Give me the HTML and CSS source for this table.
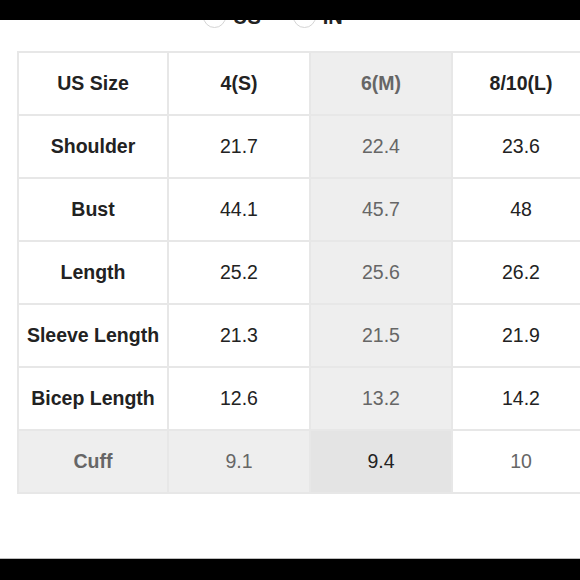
FILE: index.html
```
<!DOCTYPE html>
<html>
<head>
<meta charset="utf-8">
<link rel="stylesheet" href="styles.css">
</head>
<body>
<div class="topbar"></div>
<div class="page">
  <div class="radios">
    <label class="opt"><span class="circle"></span><span class="opt-text">US</span></label>
    <label class="opt"><span class="circle"></span><span class="opt-text">IN</span></label>
  </div>
  <table class="chart">
    <colgroup>
      <col class="c1"><col class="c2"><col class="c3"><col class="c4">
    </colgroup>
    <tr class="head"><th>US Size</th><th>4(S)</th><th class="hl">6(M)</th><th>8/10(L)</th></tr>
    <tr><th>Shoulder</th><td>21.7</td><td class="hl">22.4</td><td>23.6</td></tr>
    <tr><th>Bust</th><td>44.1</td><td class="hl">45.7</td><td>48</td></tr>
    <tr><th>Length</th><td>25.2</td><td class="hl">25.6</td><td>26.2</td></tr>
    <tr><th>Sleeve Length</th><td>21.3</td><td class="hl">21.5</td><td>21.9</td></tr>
    <tr><th>Bicep Length</th><td>12.6</td><td class="hl">13.2</td><td>14.2</td></tr>
    <tr class="rowhl"><th>Cuff</th><td>9.1</td><td class="cross">9.4</td><td class="plain">10</td></tr>
  </table>
</div>
<div class="bottombar"></div>
</body>
</html>
```
FILE: styles.css
```
html, body {
  margin: 0;
  padding: 0;
  overflow: hidden;
  background: #fff;
  font-family: "Liberation Sans", Arial, sans-serif;
  color: #222;
}
.topbar {
  position: fixed;
  top: 0;
  left: 0;
  right: 0;
  height: 20px;
  background: #000;
  z-index: 2;
}
.bottombar {
  position: fixed;
  bottom: 0;
  left: 0;
  right: 0;
  height: 21px;
  background: #000;
  border-top: 1px solid #bdbdbd;
  z-index: 2;
}
.page {
  width: 700px;
  padding-top: 5px;
}
.radios {
  display: flex;
  align-items: center;
  gap: 32px;
  margin-left: 203px;
  height: 22px;
}
.opt {
  display: flex;
  align-items: center;
  gap: 7px;
}
.circle {
  width: 21px;
  height: 21px;
  border: 1px solid #d4d4d4;
  border-radius: 50%;
}
.opt-text {
  font-weight: bold;
  font-size: 20px;
  padding-top: 3px;
}
.chart {
  margin: 24px 0 0 17px;
  border-collapse: collapse;
  table-layout: fixed;
  width: 572px;
}
.c1 { width: 150px; }
.c2 { width: 142px; }
.c3 { width: 142px; }
.c4 { width: 138px; }
.chart th, .chart td {
  border: 2px solid #e7e7e7;
  height: 61px;
  padding: 0;
  text-align: center;
  vertical-align: middle;
  font-size: 19.5px;
  color: #222;
  white-space: nowrap;
}
.chart th {
  font-weight: bold;
}
.chart td {
  font-weight: normal;
}
.chart .hl {
  background: #eeeeee;
  color: #666;
}
.rowhl th, .rowhl td {
  background: #eeeeee;
  color: #666;
}
.rowhl .cross {
  background: #e4e4e4;
  color: #222;
}
.rowhl .plain {
  background: #fff;
  color: #666;
}
```
